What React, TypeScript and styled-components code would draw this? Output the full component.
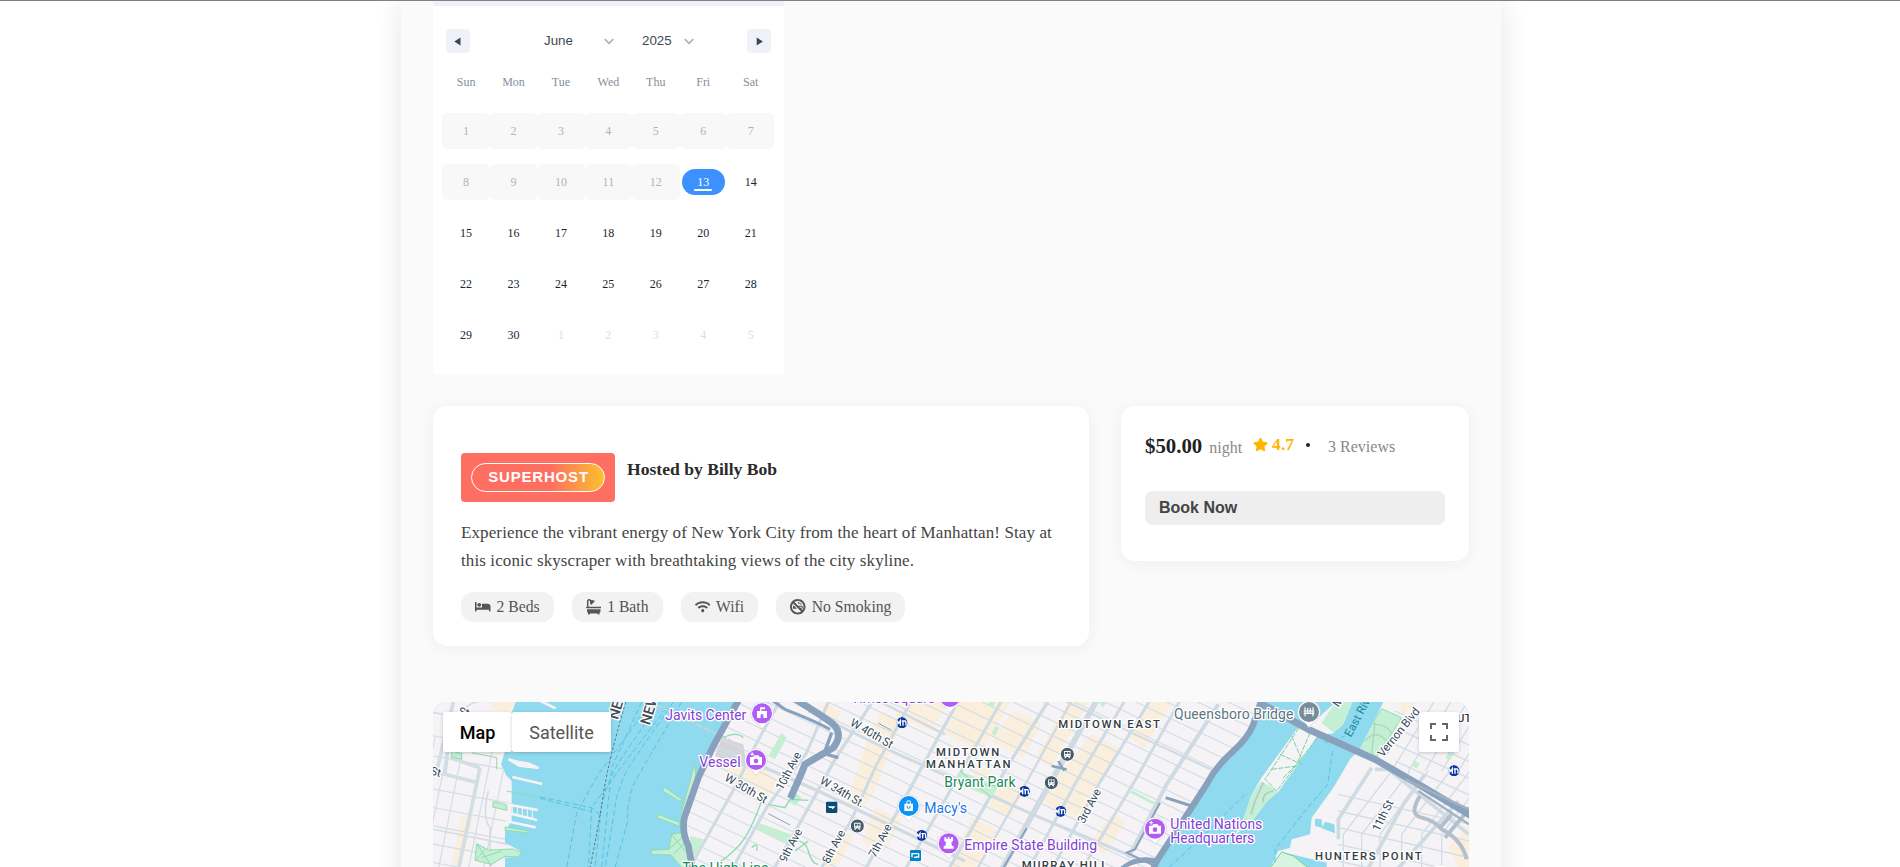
import React from "react";
import styled, { createGlobalStyle, css } from "styled-components";
import { FaBed, FaBath, FaWifi, FaSmokingBan, FaStar } from "react-icons/fa";

const GlobalStyle = createGlobalStyle`
  * { box-sizing: border-box; }
  body { margin: 0; background: #fff; font-family: "Liberation Serif", "Times New Roman", serif; color: #222; }
`;

const sans = `"Liberation Sans", Arial, sans-serif`;

const Page = styled.div`
  height: 867px;
  overflow: hidden;
  border-top: 1px solid #8a7a85;
`;

const Container = styled.main`
  width: 1100px;
  height: 1100px;
  margin: 0 auto 0 401px;
  padding: 0 32px;
  background: #fafafa;
  box-shadow: 0 0 28px rgba(0, 0, 0, 0.1);
`;

const Calendar = styled.section`
  width: 351px;
  height: 373px;
  background: #fff;
  border-top: 5px solid #eff1f8;
  padding: 23px 10px 0 9px;
`;

const CalendarHeader = styled.div`
  display: flex;
  align-items: center;
  height: 24px;
  padding: 0 3px 0 4px;
`;

const NavButton = styled.button`
  width: 24px;
  height: 24px;
  padding: 0;
  border: 0;
  border-radius: 4px;
  background: #eff2f7;
  display: flex;
  align-items: center;
  justify-content: center;
`;

const Pickers = styled.div`
  flex: 1;
  display: flex;
  padding-left: 74px;
  gap: 28px;
`;

const Picker = styled.span<{ $width: number }>`
  display: flex;
  align-items: center;
  justify-content: space-between;
  width: ${(p) => p.$width}px;
  font: 13.33px/20px ${sans};
  color: #3e484f;
`;

const Week = styled.div`
  display: grid;
  grid-template-columns: repeat(7, 47.43px);
  margin: 0 0 15px 0.4px;
`;

const WeekNames = styled(Week)`
  margin: 19px 0 21px 0.4px;
`;

const WeekName = styled.span`
  font-size: 12px;
  line-height: 20px;
  text-align: center;
  color: #84909a;
`;

type DayKind = "past" | "today" | "open" | "next";

const DayCell = styled.div<{ $kind: DayKind }>`
  height: 36px;
  display: flex;
  align-items: center;
  justify-content: center;
  font-size: 12px;
  border-radius: 5px;
  color: #20262e;
  ${(p) => p.$kind === "past" && css`background: #f8f8f8; color: #acb5bd;`}
  ${(p) => p.$kind === "next" && css`color: #d9dee2;`}
`;

const Today = styled.span`
  width: 43px;
  height: 26px;
  border-radius: 13px;
  background: #3d91ff;
  color: #fff;
  display: flex;
  flex-direction: column;
  align-items: center;
  padding-top: 6px;
  line-height: 14px;

  &::after {
    content: "";
    width: 18px;
    height: 2px;
    border-radius: 1px;
    background: #fff;
  }
`;

const Details = styled.div`
  display: flex;
  align-items: flex-start;
  gap: 32px;
  margin-top: 32px;
`;

const Card = styled.section<{ $width: number; $height: number; $pad: string }>`
  width: ${(p) => p.$width}px;
  height: ${(p) => p.$height}px;
  padding: ${(p) => p.$pad};
  background: #fff;
  border-radius: 14px;
  box-shadow: 0 2px 16px rgba(0, 0, 0, 0.05);
`;

const Host = styled.div`
  display: flex;
  align-items: flex-start;
  gap: 12px;
`;

const BadgeFrame = styled.div`
  width: 154px;
  height: 49px;
  padding: 10px;
  border-radius: 4px;
  background: #ff6f61;
`;

const Badge = styled.div`
  height: 29px;
  border: 1px solid #fff;
  border-radius: 15px;
  background: linear-gradient(90deg, #ff6f61 60%, #fbc02d 100%);
  color: #fff;
  font: bold 15px/26px ${sans};
  letter-spacing: 0.8px;
  text-indent: 1.2px;
  text-align: center;
`;

const HostName = styled.h3`
  margin: 6px 0 0;
  font-size: 17.6px;
  line-height: 20px;
  color: #2b2b2b;
`;

const Description = styled.p`
  margin: 17px 0;
  font-size: 17px;
  letter-spacing: 0.11px;
  line-height: 28px;
  color: #444;
  white-space: nowrap;
`;

const Amenities = styled.div`
  display: flex;
  gap: 18px;
`;

const Amenity = styled.span`
  height: 30px;
  display: flex;
  align-items: center;
  gap: 6px;
  padding: 0 14px;
  border-radius: 12px;
  background: #f2f2f2;
  font-size: 15.7px;
  color: #555;
`;

const PriceRow = styled.div`
  display: flex;
  align-items: baseline;
  height: 28px;
`;

const Price = styled.strong`
  font-size: 20.8px;
  line-height: 28px;
`;

const Unit = styled.span`
  margin-left: 7px;
  font-size: 16px;
  color: #888;
`;

const Rating = styled.span`
  display: flex;
  align-items: center;
  position: relative;
  top: -1px;
  margin-left: 11px;
  gap: 4px;
  font-weight: bold;
  font-size: 17.6px;
  color: #ffb400;
`;

const Dot = styled.i`
  align-self: center;
  width: 4px;
  height: 4px;
  margin: 0 18px 2px 12px;
  border-radius: 50%;
  background: #222;
`;

const Reviews = styled.span`
  position: relative;
  top: -1px;
  font-size: 16px;
  color: #888;
`;

const BookButton = styled.button`
  display: block;
  width: 300px;
  height: 34px;
  margin-top: 31px;
  padding: 0 14px 1px;
  border: 0;
  border-radius: 8px;
  background: #eee;
  color: #444;
  font: bold 16px/20px ${sans};
  text-align: left;
`;

const MapBox = styled.section`
  position: relative;
  width: 1036px;
  height: 300px;
  margin-top: 56px;
  border-radius: 14px;
  overflow: hidden;
  background: #f5f3f4;
`;

const MapTypes = styled.div`
  position: absolute;
  top: 10px;
  left: 10px;
  display: flex;
`;

const MapType = styled.button<{ $active?: boolean }>`
  height: 40px;
  width: ${(p) => (p.$active ? 69 : 99)}px;
  padding: 0;
  border: 0;
  border-radius: 2px;
  background: #fff;
  box-shadow: 0 1px 4px -1px rgba(0, 0, 0, 0.3);
  font: ${(p) => (p.$active ? 500 : 400)} 18px Roboto, sans-serif;
  color: ${(p) => (p.$active ? "#000" : "#565656")};
`;

const Fullscreen = styled.button`
  position: absolute;
  top: 10px;
  right: 10px;
  width: 40px;
  height: 40px;
  padding: 11px;
  border: 0;
  border-radius: 2px;
  background: #fff;
  box-shadow: 0 1px 4px -1px rgba(0, 0, 0, 0.3);
`;

const FullscreenIcon = styled.svg`
  display: block;
  fill: #666;
`;

const MapSvg = styled.svg`
  display: block;
  text { font-family: Roboto, sans-serif; paint-order: stroke; stroke: #fff; stroke-width: 8px; stroke-linejoin: round; }
`;

const WaterLabel = styled.text`
  && { stroke: none; }
`;

const dayNames = ["Sun", "Mon", "Tue", "Wed", "Thu", "Fri", "Sat"];

const kindOf = (i: number): DayKind => (i < 12 ? "past" : i === 12 ? "today" : i < 30 ? "open" : "next");

const weeks = Array.from({ length: 5 }, (_, w) =>
  Array.from({ length: 7 }, (_, d) => {
    const i = w * 7 + d;
    return { label: (i % 30) + 1, kind: kindOf(i) };
  })
);

function Chevron() {
  return (
    <svg width="10" height="7" viewBox="0 0 10 7" fill="none" stroke="#a9b0b5" strokeWidth="1.7">
      <path d="M.7 1 5 5.4 9.3 1" />
    </svg>
  );
}

function Arrow({ d }: { d: string }) {
  return (
    <svg width="8" height="9" viewBox="0 0 8 9" fill="#34495e">
      <path d={d} />
    </svg>
  );
}

/* Map geometry uses three units per screen pixel. */

type Label = { t: string; x: number; y: number; w?: number; r?: number; c: string; s?: number; b?: boolean };

const PURPLE = "#8440d6";
const ROAD = "#34475a";
const AREA = "#333b43";

const labels: Label[] = [
  { t: "St", x: 14, y: 250, r: 15, c: ROAD, s: 34 },
  { t: "St", x: 100, y: 72, r: 10, c: ROAD, s: 34 },
  { t: "NE", x: 578, y: 88, r: -73, c: "#444c55", s: 44, b: true },
  { t: "NEW", x: 674, y: 104, r: -73, c: "#444c55", s: 44, b: true },
  { t: "Javits Center", x: 721, y: 88, w: 243, c: PURPLE },
  { t: "Vessel", x: 823, y: 229, w: 124, c: PURPLE },
  { t: "Times Square", x: 1278, y: 37, w: 252, c: PURPLE },
  { t: "W 40th St", x: 1273, y: 102, w: 142, r: 30, c: ROAD, s: 35 },
  { t: "W 30th St", x: 896, y: 267, w: 142, r: 30, c: ROAD, s: 35 },
  { t: "W 34th St.", x: 1182, y: 276, w: 148, r: 30, c: ROAD, s: 35 },
  { t: "10th Ave", x: 1072, y: 300, w: 124, r: -62, c: ROAD, s: 35 },
  { t: "9th Ave", x: 1082, y: 516, w: 108, r: -62, c: ROAD, s: 35 },
  { t: "8th Ave", x: 1211, y: 520, w: 108, r: -62, c: ROAD, s: 35 },
  { t: "7th Ave", x: 1351, y: 502, w: 108, r: -62, c: ROAD, s: 35 },
  { t: "3rd Ave", x: 1977, y: 400, w: 112, r: -62, c: ROAD, s: 35 },
  { t: "11th St", x: 2862, y: 424, w: 100, r: -64, c: ROAD, s: 35 },
  { t: "Vernon Blvd", x: 2874, y: 200, w: 178, r: -51, c: ROAD, s: 35 },
  { t: "Main", x: 2740, y: 50, r: -55, c: ROAD, s: 35 },
  { t: "The High Line", x: 772, y: 545, w: 258, c: "#178a5c" },
  { t: "MIDTOWN EAST", x: 1900, y: 111, w: 305, c: AREA, s: 34, b: true },
  { t: "MIDTOWN", x: 1533, y: 195, w: 190, c: AREA, s: 34, b: true },
  { t: "MANHATTAN", x: 1503, y: 231, w: 254, c: AREA, s: 34, b: true },
  { t: "MURRAY HILL", x: 1790, y: 534, w: 257, c: AREA, s: 34, b: true },
  { t: "HUNTERS POINT", x: 2670, y: 507, w: 320, c: AREA, s: 34, b: true },
  { t: "UTOPIA", x: 3096, y: 93, c: AREA, s: 34, b: true },
  { t: "Bryant Park", x: 1558, y: 287, w: 214, c: "#178a5c" },
  { t: "Macy's", x: 1498, y: 366, w: 128, c: "#1a73e8" },
  { t: "Empire State Building", x: 1618, y: 477, w: 398, c: PURPLE },
  { t: "United Nations", x: 2236, y: 415, w: 276, c: PURPLE },
  { t: "Headquarters", x: 2236, y: 457, w: 252, c: PURPLE },
  { t: "Queensboro Bridge", x: 2247, y: 84, w: 358, c: "#5b7585" },
];

const glyphs: Record<string, React.ReactNode> = {
  museum: <path fillRule="evenodd" d="M-15 14V-7h9v-11H9v6H-2v5h17v21zM-4 14v-11h8v11z" />,
  camera: <path fillRule="evenodd" d="M-18-9h9l4-5H7l4 5h7v24h-36zM-7 3a7 7 0 1 0 14 0a7 7 0 1 0-14 0M-17-19h4v-4h3v4h4v3h-4v4h-3v-4h-4z" />,
  bag: <path fillRule="evenodd" d="M-13-7h6v-3a7 7 0 0 1 14 0v3h6v22h-26zM-4-7h8v-3a4 4 0 0 0-8 0zM-6-1v3a6 6 0 0 0 12 0v-3H3v3a3 3 0 0 1-6 0v-3z" />,
  tower: <path d="M-13-18h6v5h4v-5h6v5h4v-5h6v11l-5 4 2 11h5v8h-30v-8h5l2-11-5-4z" />,
  bridge: <path d="M-12-14V13M-4-12V3M4-12V3M12-14V13M-16-3H16M-16 4H16" fill="none" stroke="#fff" strokeWidth="3.5" />,
};

const pins = [
  { x: 1011, y: 67, c: "#b15cf5", g: "museum" },
  { x: 993, y: 207, c: "#b15cf5", g: "camera" },
  { x: 1575, y: 18, c: "#b15cf5", g: "museum" },
  { x: 1571, y: 457, c: "#b15cf5", g: "tower" },
  { x: 2190, y: 413, c: "#b15cf5", g: "camera" },
  { x: 1451, y: 345, c: "#0c94f7", g: "bag" },
  { x: 2652, y: 63, c: "#758d99", g: "bridge" },
];

const subways = [[1431, 95], [1490, 433], [1798, 301], [1907, 361], [3087, 239]];
const stations = [[1927, 190], [1879, 275], [1297, 405]];

const MANHATTAN = "M945 33 865 170 820 260 780 370V430L800 531H2185L2260 420 2385 218 2480 110 2500 33z";
const NEW_JERSEY = "M24 33H272L262 60 245 78V165L228 220 243 252 260 270V390L240 420V455L285 480V497L240 500V531H24z";
const QUEENS = "M2875 33 2805 175 2775 205 2725 290 2660 380 2655 430 2600 445 2595 470 2560 480 2535 531H3132V33z";
const ISLAND = "M2782 33 2755 100 2722 128 2680 130 2645 184 2560 302 2525 332 2480 392 2430 432 2462 370 2478 315 2508 262 2622 105 2675 85 2732 33z";
const HUDSON_ROAD = "M945 20 865 165 820 260 778 380Q770 425 790 465L804 540";
const FDR = "M2510 25 2485 100Q2470 140 2420 185T2345 280L2262 408 2195 510 2180 545";
const TUNNEL = "M1110 25Q1170 60 1215 92T1225 170L1140 220 1128 250 1096 322";
const QUEENSBORO = "M2500 33 2650 115 2850 205 2980 280 3140 375";

const avenues: [string, number][] = [
  ["M1070 20 990 165 935 280 800 520", 9],
  ["M1220 10 1145 185 1025 350 915 545", 9],
  ["M1350 20 1230 205 1145 360 1040 545", 10],
  ["M1465 20 1355 220 1275 395 1180 545", 9],
  ["M1605 20 1435 330 1315 545", 10],
  ["M1735 20 1575 300 1435 545", 9],
  ["M1870 30 1745 230 1565 545", 10],
  ["M1945 20 1815 255 1650 545", 7],
  ["M2020 20 1925 190 1845 330 1725 545", 17],
  ["M2105 20 1955 270 1805 545", 9],
  ["M2180 20 2015 290 1875 545", 9],
  ["M2270 20 2135 260 1965 545", 9],
  ["M2380 40 2225 280 2110 500", 12],
  ["M860 160 1180 300 1620 510", 10],
  ["M1150 60 1420 190 1845 380 2130 500", 9],
  ["M1340 20 1560 130", 7],
  ["M1900 20 2130 130 2390 250", 6],
];

const blocks = [
  "M1165 65 1200 38 1250 60 1220 110z", "M1340 110 1370 60 1430 90 1345 310 1300 360 1260 340z",
  "M1440 33H1570L1520 120 1410 75z", "M1600 33H1760L1670 180 1560 130z", "M1760 60 1850 95 1795 200 1700 150z",
  "M1930 33H1990L1880 230 1830 200z", "M2000 130 2080 170 1960 380 1850 330 1895 260z",
  "M895 225 1000 215 1060 270 1030 320 920 265z", "M1350 350 1430 385 1380 480 1310 450z", "M1250 420 1285 435 1240 520 1200 531z",
  "M1730 270 1800 290 1760 380 1690 350z", "M1640 380 1720 420 1650 531H1570z", "M2060 370 2100 390 2040 490 1990 460z",
  "M2180 33H2240L2160 170 2110 140z", "M1630 215 1700 240 1670 300z",
];

function StreetMap() {
  return (
    <MapSvg width="1036" height="166" viewBox="24 33 3108 498" preserveAspectRatio="xMinYMin slice">
      <defs>
        <clipPath id="manhattan"><path d={MANHATTAN} /></clipPath>
        <clipPath id="jersey"><path d={NEW_JERSEY} /></clipPath>
        <clipPath id="queens"><path d={QUEENS} /></clipPath>
        <clipPath id="disc"><circle r="17" /></clipPath>
      </defs>
      <rect x="0" y="0" width="3200" height="600" fill="#8fdaee" />
      <g fill="#f5f3f5">
        <path d={NEW_JERSEY} /><path d={MANHATTAN} /><path d={QUEENS} /><path d={ISLAND} />
      </g>

      <g clipPath="url(#jersey)" fill="none" stroke="#d3dde4" strokeWidth="3.5">
        <path d="M110 375 143 382 108 531H78z" fill="#f9efdc" stroke="none" />
        <path d="M200 33H272L250 65 205 55z" fill="#f9efdc" stroke="none" />
        {[0, 45, 90, 180, 225].map((x) => <path key={x} d={`M${x + 30} 140 ${x - 55} 560`} />)}
        {[130, 190, 290, 345, 400, 455, 510].map((y) => <path key={y} d={`M0 ${y}l280 52`} />)}
        <path d="M85 33 35 240M165 230 95 560M30 242 160 275M75 200 165 230M80 60 60 250" strokeWidth="11" />
        <path d="M0 410 250 460M24 65 220 95M110 60Q150 20 200 33M190 300q-20 80 5 110v120" strokeWidth="5" />
      </g>
      <g fill="#f5f3f5" stroke="#f5f3f5" strokeWidth="8" strokeLinejoin="round">
        <path d="M330 22 392 52M250 205 338 231M262 258 352 279M245 340 338 357M245 365 336 387M242 390 332 409" />
        <path d="m260 210 50 8 28 12-55-6z" />
      </g>
      <path d="M262 348v26m15-24v26m15-24v26m15-24v26m15-24v26" stroke="#f5f3f5" strokeWidth="3" />
      <g fill="#c5efd4" stroke="#8edcae" strokeWidth="3">
        <path d="M205 332 245 342 246 358 203 348zM240 408 308 419V425L240 418zM155 458 190 477 265 474 288 485 282 498 240 496 200 520 150 508z" />
        <path d="M80 180 110 188V205L80 198z" />
        <path d="M245 300 345 320M140 185 215 200 215 235M155 458 200 525M170 500 230 480M180 475 150 510" fill="none" />
        <path d="M718 288 770 325 766 332 714 300zM700 370 765 395 762 405 696 380zM678 478 732 475 740 430 768 425 786 470 806 531H770L738 492 680 490z" />
        <path d="M808 220 790 290 765 380 775 400 815 270z" />
        <path d="M740 430 780 480M732 475 775 435M745 490 780 455" fill="none" />
      </g>
      <g fill="none" stroke="#56c2e2" strokeWidth="3" strokeDasharray="16 9">
        <path d="M680 33 520 250 455 365 425 531M725 50 580 240 500 350 490 531" />
        <path d="M745 33 610 230Q575 300 570 350L540 531M705 33 580 215Q535 300 528 360L510 531M770 33 630 270Q605 330 608 390L570 531" />
        <path d="M345 318 500 350 530 375M345 322 500 362" />
        <path d="M650 33 560 230 530 531" />
      </g>
      <path d="M602 33Q550 210 535 310T495 531" fill="none" stroke="#59717e" strokeWidth="3" strokeDasharray="8 6" />
      <path d="M690 40 920 150" stroke="#cbd2d8" strokeWidth="5" strokeDasharray="22 5" />

      <g clipPath="url(#manhattan)" fill="none" stroke="#cfdae3">
        <g fill="#f9efdc" stroke="none">{blocks.map((d) => <path key={d} d={d} />)}</g>
        <path d="M890 140 955 160 965 230 870 195z" fill="#d5d4da" stroke="none" />
        <g strokeWidth="3.5" stroke="#d4dee6">
          {Array.from({ length: 41 }, (_, i) => <path key={i} d={`M700 ${-870 + i * 44}L2500 ${-12 + i * 44}`} />)}
        </g>
        {avenues.map(([d, w]) => <path key={d} d={d} strokeWidth={w} />)}
        <g fill="#c4efd3" stroke="none">
          <path d="M1070 125 1085 140 1050 205 1030 195zM1605 240 1720 285 1700 320 1595 275zM1000 395 1110 435 1105 465 995 415zM1105 300 1130 320 1110 345 1090 330zM1710 105 1723 110 1710 135 1700 130zM2120 297 2192 335 2188 342 2115 305zM795 435 835 445 815 490 798 500zM1690 33H1710L1705 50 1690 45zM2020 33H2045L2035 50z" />
        </g>
        <g stroke="#8ddbad" strokeWidth="4">
          <path d="M895 140q40-20 60 0M1010 330Q985 400 960 440T875 520M1030 340 1080 350 1095 325 1150 328M1090 450q50-10 60 30t30 40M1110 480l40-30M980 470q20-20 15 10" />
          <path d="M1605 240 1700 320M1720 285 1595 275" strokeWidth="3" />
        </g>
        <g stroke="#88a1bd">
          <path d="M1030 20 1080 55Q1170 90 1215 115" strokeWidth="9" />
          <path d={TUNNEL} strokeWidth="21" />
          <path d="M1220 125 1200 180 1140 215M1205 190l35 10" strokeWidth="10" />
          <path d="M1030 368 1095 402M1360 97 1400 118" strokeWidth="3" />
          <path d="M1805 412 1735 531M2205 335 2130 475 2105 485 2200 530" strokeWidth="6" />
          <path d="M1880 225l45 10M1900 210 1918 240" strokeWidth="7" />
          <path d="M2222 320 2300 345M2200 510q-60-20-110 20M2215 520q-70-25-130 15" strokeWidth="9" />
        </g>
      </g>
      <path d={HUDSON_ROAD} fill="none" stroke="#88a1bd" strokeWidth="20" />

      <g clipPath="url(#queens)" fill="none" stroke="#d3dde5" strokeWidth="4">
        <path d="M3070 470 3132 400V531H3100zM2920 33h50l-35 40z" fill="#f9efdc" stroke="none" />
        {[55, 110, 165, 230, 290, 350].map((x) => <path key={x} d={`M${2845 + x} 240 ${2700 + x} 430V560`} />)}
        {[310, 360, 410, 460, 510].map((y) => <path key={y} d={`M2740 ${y}l460 105`} />)}
        {[50, 100, 150, 200, 250].map((x) => <path key={x} d={`M${2985 + x} 20 ${2850 + x} 240`} />)}
        {[60, 110, 160, 210].map((y) => <path key={y} d={`M2910 ${y}l240 110`} />)}
        <path d="M2840 230 2740 385V445M3000 250 2935 340 2830 531M3100 330 2920 531M2850 235H2890L3132 430" stroke="#cfdae3" strokeWidth="11" />
        <path d="M2985 315q-35 55 5 65t60 35q60 30 75 90M3080 370 3045 410M3135 350 3060 440" stroke="#b5bfcb" strokeWidth="12" />
        <path d="M2870 53 2930 80 2905 120 2850 205 2795 175z" fill="#c5efd4" stroke="#8edcae" strokeWidth="3" />
        <path d="M2845 100q45 0 55 30M2820 150q30-35 60-5t-5 50M2850 95l-10 95" stroke="#a1dcb6" />
        <path d="M2965 208 2985 218 2975 232 2960 225zM3070 185 3085 190 3075 208 3062 202z" fill="#c5efd4" stroke="none" />
      </g>
      <path d="M2670 383 2690 385 2692 410 2670 405zM2700 392 2728 400 2730 427 2690 412z" fill="#8fdaee" />
      <path d="M2568 482 2600 490 2705 515V531H2640L2600 500z" fill="#8fdaee" />
      <path d="M2535 531 2570 483 2605 495 2650 531z" fill="#d6f4e0" stroke="#6ed39a" strokeWidth="3" />

      <path d="M2732 33H2782L2755 100 2725 125 2690 95zM2508 270 2560 302 2525 332 2480 392 2440 425 2478 315z" fill="#c5efd4" />
      <path
        d="M2622 110 2520 265 2555 300 2650 175 2685 132 2622 105M2565 190l65 30M2600 135l30 70-60 60M2540 235l75-10M2655 125l-40 95"
        fill="none"
        stroke="#77d3a0"
        strokeWidth="3"
        strokeDasharray="16 4"
      />
      <path d="M2515 275 2490 330 2478 370M2545 300q-35 5-30 35" fill="none" stroke="#b6c9c6" strokeWidth="5" />
      <path d="M2723 180 2708 280 2640 360 2550 475V520M2460 310 2350 420 2230 531M2700 155l60-20" fill="none" stroke="#56c2e2" strokeWidth="3" strokeDasharray="16 9" />
      <path d={FDR} fill="none" stroke="#88a1bd" strokeWidth="19" />
      <path d={QUEENSBORO} fill="none" stroke="#88a1bd" strokeWidth="21" />
      <path d="M2940 265 3132 355M2980 300 3132 400" stroke="#a2b0c1" strokeWidth="7" />
      <WaterLabel x="2778" y="140" fontSize="35" fill="#20869c" transform="rotate(-62 2778 140)">East River</WaterLabel>

      {labels.map((l) => (
        <text
          key={`${l.t}${l.x}`}
          x={l.x}
          y={l.y}
          fill={l.c}
          fontSize={l.s ?? 42}
          fontWeight={l.b ? 500 : 400}
          textLength={l.w}
          transform={l.r ? `rotate(${l.r} ${l.x} ${l.y})` : undefined}
        >
          {l.t}
        </text>
      ))}

      {pins.map((p) => (
        <g key={`${p.x}`} transform={`translate(${p.x} ${p.y})`}>
          <path d="M0 47-12 32A34 34 0 1 1 12 32z" fill="#fff" stroke="#c9c4cf" strokeWidth="1.5" />
          <circle r="30" fill={p.c} />
          <g fill="#fff">{glyphs[p.g]}</g>
        </g>
      ))}
      {subways.map(([x, y]) => (
        <g key={x} transform={`translate(${x} ${y})`} clipPath="url(#disc)">
          <circle r="17" fill="#0b3aa5" />
          <path d="M-15 9V-6l5 8 5-8V9M-1-5h10q3 0 3 4V9M3-5V9" fill="none" stroke="#fff" strokeWidth="4" />
        </g>
      ))}
      {stations.map(([x, y]) => (
        <g key={x} transform={`translate(${x} ${y})`}>
          <circle r="21" fill="#455b6a" stroke="#fff" strokeWidth="3" />
          <path transform="scale(.88)" fillRule="evenodd" fill="#fff" d="M-11-11h22V8H7l4 5H6L2 8h-4l-4 5h-5l4-5h-4zM-8-8v7h7v-7zM1-8v7h7v-7zM-7 2v3h3V2zM4 2v3h3V2z" />
        </g>
      ))}
      <rect x="1203" y="332" width="34" height="34" rx="3" fill="#0a4c78" />
      <path d="M1208 346h24l-9 9-3-4h-6z" fill="#fff" />
      <rect x="1455" y="477" width="33" height="33" rx="3" fill="#0086c8" />
      <path d="M1461 499v-11h9M1481 487v11h-9M1467 499h7M1467 488h12" fill="none" stroke="#fff" strokeWidth="4" />
      <circle cx="3045" cy="584" r="60" fill="#fff" />
    </MapSvg>
  );
}

export default function App() {
  return (
    <Page>
      <GlobalStyle />
      <Container>
        <Calendar>
          <CalendarHeader>
            <NavButton aria-label="Previous month"><Arrow d="M6.5.5v8L.3 4.5z" /></NavButton>
            <Pickers>
              <Picker $width={70}>June <Chevron /></Picker>
              <Picker $width={52}>2025 <Chevron /></Picker>
            </Pickers>
            <NavButton aria-label="Next month"><Arrow d="M1.7.5v8l6.2-4z" /></NavButton>
          </CalendarHeader>
          <WeekNames>
            {dayNames.map((n) => <WeekName key={n}>{n}</WeekName>)}
          </WeekNames>
          {weeks.map((week, w) => (
            <Week key={w}>
              {week.map((d) => (
                <DayCell key={d.label} $kind={d.kind}>
                  {d.kind === "today" ? <Today>{d.label}</Today> : d.label}
                </DayCell>
              ))}
            </Week>
          ))}
        </Calendar>

        <Details>
          <Card $width={656} $height={240} $pad="47px 28px 0">
            <Host>
              <BadgeFrame><Badge>SUPERHOST</Badge></BadgeFrame>
              <HostName>Hosted by Billy Bob</HostName>
            </Host>
            <Description>
              Experience the vibrant energy of New York City from the heart of Manhattan! Stay at
              <br />
              this iconic skyscraper with breathtaking views of the city skyline.
            </Description>
            <Amenities>
              <Amenity><FaBed size={15.5} />2 Beds</Amenity>
              <Amenity><FaBath size={15.5} />1 Bath</Amenity>
              <Amenity><FaWifi size={15.5} />Wifi</Amenity>
              <Amenity><FaSmokingBan size={15.5} />No Smoking</Amenity>
            </Amenities>
          </Card>
          <Card $width={348} $height={155} $pad="26px 24px 0">
            <PriceRow>
              <Price>$50.00</Price>
              <Unit>night</Unit>
              <Rating><FaStar size={15} />4.7</Rating>
              <Dot />
              <Reviews>3 Reviews</Reviews>
            </PriceRow>
            <BookButton>Book Now</BookButton>
          </Card>
        </Details>

        <MapBox>
          <StreetMap />
          <MapTypes>
            <MapType $active>Map</MapType>
            <MapType>Satellite</MapType>
          </MapTypes>
          <Fullscreen aria-label="Fullscreen">
            <FullscreenIcon width="18" height="18" viewBox="0 0 18 18">
              <path d="M0 0v6h2V2h4V0H0zm16 0h-4v2h4v4h2V0h-2zm0 16h-4v2h6v-6h-2v4zM2 12H0v6h6v-2H2v-4z" />
            </FullscreenIcon>
          </Fullscreen>
        </MapBox>
      </Container>
    </Page>
  );
}
